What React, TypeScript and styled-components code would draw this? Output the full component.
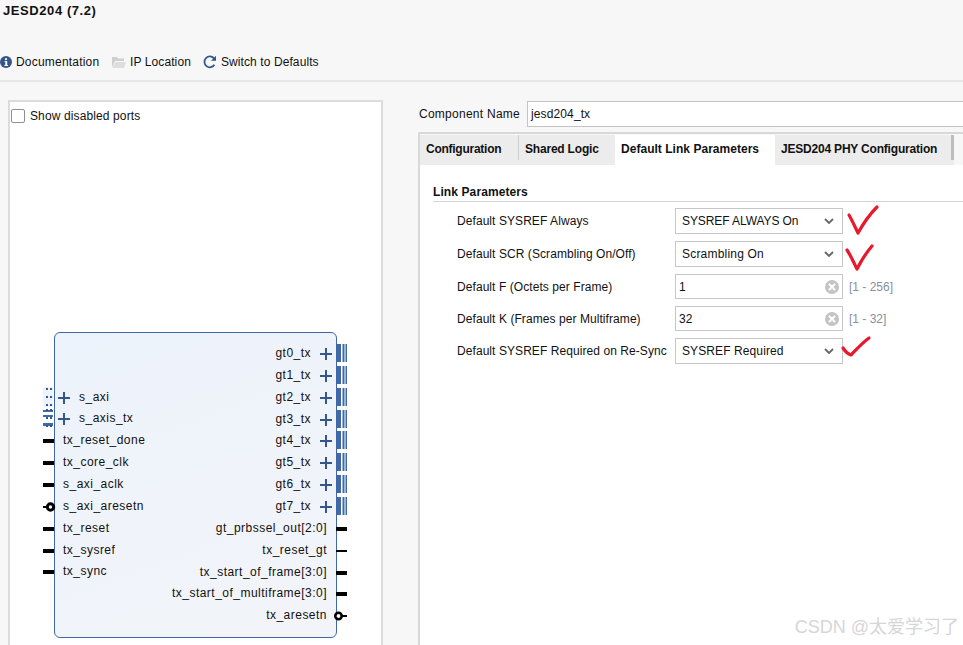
import React from "react";
import styled, { createGlobalStyle } from "styled-components";

const Global = createGlobalStyle`
  html, body { margin: 0; padding: 0; background: #f7f7f7; }
  * { box-sizing: border-box; }
`;

const Page = styled.div`
  position: relative;
  width: 963px;
  height: 645px;
  overflow: hidden;
  background: #f7f7f7;
  color: #111;
  font-family: "Liberation Sans", Arial, sans-serif;
  font-size: 12px;
  display: flex;
  flex-direction: column;
`;

const Header = styled.header`
  height: 82px;
  flex: none;
  border-bottom: 2px solid #e6e6e6;
  display: flex;
  flex-direction: column;
`;

const Title = styled.div`
  font-weight: 700;
  font-size: 13px;
  line-height: 15px;
  letter-spacing: 0.58px;
  padding: 3px 0 0 3px;
  height: 54px;
`;

const Toolbar = styled.div`
  display: flex;
  align-items: center;
  height: 16px;
`;

const ToolItem = styled.div<{ $w: number; $ls: number }>`
  display: flex;
  align-items: center;
  gap: 4px;
  width: ${(p) => p.$w}px;
  flex: none;
  letter-spacing: ${(p) => p.$ls}px;
  white-space: nowrap;
`;

const Main = styled.main`
  flex: 1;
  display: flex;
  min-height: 0;
`;

const Left = styled.section`
  width: 375px;
  margin: 18px 0 0 8px;
  background: #fff;
  border: 2px solid #dcdcdc;
  border-bottom: none;
  flex: none;
  position: relative;
`;

const ShowPorts = styled.label`
  display: flex;
  align-items: center;
  gap: 5px;
  padding: 7px 0 0 1px;
  letter-spacing: 0.12px;
`;

const Box = styled.span`
  width: 14px;
  height: 14px;
  border: 1px solid #8e8e8e;
  border-radius: 2px;
  background: #fff;
  flex: none;
`;

const Block = styled.div`
  position: absolute;
  left: 44px;
  top: 230px;
  width: 283px;
  height: 306px;
  border: 1px solid #3f67a8;
  border-radius: 6px;
  background: linear-gradient(160deg, #edf3fc 0%, #f2f4f8 100%);
  display: flex;
  justify-content: space-between;
  letter-spacing: 0.48px;
`;

const PortCol = styled.div<{ $top: number; $right?: boolean }>`
  display: flex;
  flex-direction: column;
  padding-top: ${(p) => p.$top}px;
  align-items: ${(p) => (p.$right ? "flex-end" : "flex-start")};
`;

const Port = styled.div<{ $right?: boolean; $plus?: boolean }>`
  position: relative;
  height: 21.86px;
  line-height: 21.86px;
  white-space: nowrap;
  padding-left: ${(p) => (p.$right ? 0 : p.$plus ? 24 : 8)}px;
  padding-right: ${(p) => (p.$right ? (p.$plus ? 25 : 9) : 0)}px;
`;

const PlusIcon = styled.svg<{ $right?: boolean }>`
  position: absolute;
  top: 5px;
  ${(p) => (p.$right ? "right: 4px;" : "left: 3px;")}
`;

const PinIcon = styled.svg<{ $right?: boolean }>`
  position: absolute;
  top: 0;
  ${(p) => (p.$right ? "right: -11px;" : "left: -12px;")}
`;

const Right = styled.section`
  flex: 1;
  min-width: 0;
  margin: 19px 0 0 35px;
  display: flex;
  flex-direction: column;
`;

const NameRow = styled.div`
  display: flex;
  align-items: center;
  height: 26px;
`;

const NameLabel = styled.div`
  width: 109px;
  padding-left: 1px;
  flex: none;
  letter-spacing: 0.26px;
`;

const NameInput = styled.div`
  flex: 1;
  height: 26px;
  background: #fff;
  border: 1px solid #c4c4c4;
  border-right: none;
  padding-left: 3px;
  line-height: 24px;
  letter-spacing: 0.12px;
`;

const TabPane = styled.div`
  margin-top: 5px;
  flex: 1;
  border-top: 2px solid #d8d8d8;
  border-left: 2px solid #d8d8d8;
  padding-top: 1px;
  display: flex;
  flex-direction: column;
`;

const TabBar = styled.div`
  display: flex;
  height: 30px;
  flex: none;
  width: 534px;
  background: #ececec;
  position: relative;
`;

const Tab = styled.div<{ $w: number; $ls: number; $active?: boolean; $sep?: boolean }>`
  width: ${(p) => p.$w}px;
  flex: none;
  background: ${(p) => (p.$active ? "#fff" : "transparent")};
  font-weight: 700;
  letter-spacing: ${(p) => p.$ls}px;
  padding: 7px 0 0 6px;
  line-height: 15px;
  white-space: nowrap;
  position: relative;
  &::after {
    content: "";
    display: ${(p) => (p.$sep ? "block" : "none")};
    position: absolute;
    right: 0;
    top: 0;
    width: 1px;
    height: 25px;
    background: #cfcfcf;
  }
`;

const TabEnd = styled.div`
  width: 3px;
  height: 25px;
  background: #bdbdbd;
  margin-left: 1px;
`;

const Content = styled.div`
  flex: 1;
  background: #fff;
  padding: 20px 0 0 13px;
`;

const GroupTitle = styled.div`
  font-weight: 700;
  line-height: 14px;
  letter-spacing: 0.1px;
  padding-bottom: 2px;
  border-bottom: 1px solid #d4d4d4;
`;

const Rows = styled.div`
  display: flex;
  flex-direction: column;
  gap: 7px;
  padding: 6px 0 0 24px;
`;

const Row = styled.div`
  display: flex;
  align-items: center;
`;

const RowLabel = styled.div`
  width: 218px;
  flex: none;
  letter-spacing: 0.07px;
  white-space: nowrap;
`;

const Field = styled.div<{ $h: number; $ls?: number }>`
  width: 168px;
  height: ${(p) => p.$h}px;
  flex: none;
  background: #fff;
  border: 1px solid #c6c6c6;
  display: flex;
  align-items: center;
  justify-content: space-between;
  padding: 0 3px 0 3px;
  letter-spacing: ${(p) => p.$ls ?? 0.14}px;
`;

const SelectField = styled(Field)`
  padding: 0 8px 0 6px;
`;

const Range = styled.span`
  margin-left: 6px;
  color: #8a8f99;
  letter-spacing: 0;
`;

const Checks = styled.svg`
  position: absolute;
  left: 840px;
  top: 200px;
`;

const Watermark = styled.div`
  position: absolute;
  right: 4px;
  bottom: 6px;
  font-size: 18px;
  line-height: 24px;
  color: #d6d6d6;
  font-family: "Liberation Sans", "Noto Sans CJK SC", sans-serif;
  white-space: nowrap;
`;

const Plus = ({ right }: { right?: boolean }) => (
  <PlusIcon $right={right} width="12" height="12" viewBox="0 0 12 12">
    <path d="M0 6h12M6 0v12" stroke="#34568b" strokeWidth="2" />
  </PlusIcon>
);

const Bus = () => (
  <PinIcon $right width="10" height="20" viewBox="0 0 10 20">
    <path d="M0 1h4v18H0zM5.5 1h2v18h-2zM8.5 1H10v18H8.5z" fill="#3f6aa6" />
  </PinIcon>
);

const Bar = ({ right, thin }: { right?: boolean; thin?: boolean }) => (
  <PinIcon $right={right} width="11" height="22" viewBox="0 0 11 22">
    <rect x="0" y={thin ? 10 : 9} width="11" height={thin ? 2 : 4} fill="#000" />
  </PinIcon>
);

const Circle = ({ right }: { right?: boolean }) => (
  <PinIcon $right={right} width="13" height="22" viewBox="0 0 13 22">
    {right ? (
      <>
        <rect x="7" y="10" width="6" height="2" fill="#000" />
        <circle cx="4.5" cy="11" r="3.2" fill="#fff" stroke="#000" strokeWidth="2.6" />
      </>
    ) : (
      <>
        <rect x="0" y="10" width="5" height="2" fill="#000" />
        <circle cx="7.5" cy="11" r="3.2" fill="#fff" stroke="#000" strokeWidth="3" />
      </>
    )}
  </PinIcon>
);

const AxiIcon = ({ strong }: { strong?: boolean }) => (
  <PinIcon width="10" height="20" viewBox="0 0 10 20">
    <rect x="0" y="0" width="10" height="20" fill={strong ? "#ffffff" : "#edf3fc"} />
    {strong && <path d="M0 2h10v2H0zM0 7h10v2H0zM0 15h10v3H0z" fill="#3f6aa6" />}
    <path
      d="M3 1h2v2H3zM7 1h2v2H7zM3 9h2v2H3zM7 9h2v2H7zM3 17h2v2H3zM7 17h2v2H7z"
      fill="#34568b"
    />
  </PinIcon>
);

const leftPorts: { n: string; k: string }[] = [
  { n: "s_axi", k: "axi" },
  { n: "s_axis_tx", k: "axis" },
  { n: "tx_reset_done", k: "bar" },
  { n: "tx_core_clk", k: "bar" },
  { n: "s_axi_aclk", k: "bar" },
  { n: "s_axi_aresetn", k: "circle" },
  { n: "tx_reset", k: "bar" },
  { n: "tx_sysref", k: "bar" },
  { n: "tx_sync", k: "bar" },
];

const rightPorts: { n: string; k: string }[] = [
  ...Array.from({ length: 8 }, (_, i) => ({ n: `gt${i}_tx`, k: "bus" })),
  { n: "gt_prbssel_out[2:0]", k: "bar" },
  { n: "tx_reset_gt", k: "thin" },
  { n: "tx_start_of_frame[3:0]", k: "bar" },
  { n: "tx_start_of_multiframe[3:0]", k: "bar" },
  { n: "tx_aresetn", k: "circle" },
];

const Chevron = () => (
  <svg width="10" height="6" viewBox="0 0 10 6">
    <path d="M1 1l4 4 4-4" fill="none" stroke="#666" strokeWidth="1.8" />
  </svg>
);

const ClearIcon = () => (
  <svg width="14" height="14" viewBox="0 0 14 14">
    <circle cx="7" cy="7" r="7" fill="#c4c4c4" />
    <path d="M4 4l6 6M10 4l-6 6" stroke="#fff" strokeWidth="2" />
  </svg>
);

export default function App() {
  return (
    <Page>
      <Global />
      <Header>
        <Title>JESD204 (7.2)</Title>
        <Toolbar>
          <ToolItem $w={112} $ls={0.2}>
            <svg width="12" height="12" viewBox="0 0 12 12">
              <circle cx="6" cy="6" r="6" fill="#34568b" />
              <path d="M5 2.2h2v1.8H5zM4.6 5h2.6v4h.8v1H4.4V9h.9V6h-.7z" fill="#fff" />
            </svg>
            <span>Documentation</span>
          </ToolItem>
          <ToolItem $w={91} $ls={0.1}>
            <svg width="14" height="12" viewBox="0 0 14 12">
              <path d="M0 1h5l1 1.5h6V5H3L0 11z" fill="#cfcfcf" />
              <path d="M0 12l3-6h11l-2 6z" fill="#dedede" />
            </svg>
            <span>IP Location</span>
          </ToolItem>
          <ToolItem $w={130} $ls={0.09}>
            <svg width="14" height="14" viewBox="0 0 14 14">
              <path d="M11.4 9.8A5.4 5.4 0 1 1 11 3.4" fill="none" stroke="#34568b" strokeWidth="1.8" />
              <path d="M13 0.8v5h-5z" fill="#34568b" />
            </svg>
            <span>Switch to Defaults</span>
          </ToolItem>
        </Toolbar>
      </Header>
      <Main>
        <Left>
          <ShowPorts>
            <Box />
            Show disabled ports
          </ShowPorts>
          <Block>
            <PortCol $top={53.5}>
              {leftPorts.map((p) => (
                <Port key={p.n} $plus={p.k === "axi" || p.k === "axis"}>
                  {(p.k === "axi" || p.k === "axis") && (
                    <>
                      <AxiIcon strong={p.k === "axis"} />
                      <Plus />
                    </>
                  )}
                  {p.k === "bar" && <Bar />}
                  {p.k === "circle" && <Circle />}
                  {p.n}
                </Port>
              ))}
            </PortCol>
            <PortCol $top={10} $right>
              {rightPorts.map((p) => (
                <Port key={p.n} $right $plus={p.k === "bus"}>
                  {p.k === "bus" && (
                    <>
                      <Plus right />
                      <Bus />
                    </>
                  )}
                  {p.k === "bar" && <Bar right />}
                  {p.k === "thin" && <Bar right thin />}
                  {p.k === "circle" && <Circle right />}
                  {p.n}
                </Port>
              ))}
            </PortCol>
          </Block>
        </Left>
        <Right>
          <NameRow>
            <NameLabel>Component Name</NameLabel>
            <NameInput>jesd204_tx</NameInput>
          </NameRow>
          <TabPane>
            <TabBar>
              <Tab $w={99} $ls={-0.26} $sep>Configuration</Tab>
              <Tab $w={96} $ls={-0.2}>Shared Logic</Tab>
              <Tab $w={160} $ls={0.03} $active>Default Link Parameters</Tab>
              <Tab $w={175} $ls={-0.2}>JESD204 PHY Configuration</Tab>
              <TabEnd />
            </TabBar>
            <Content>
              <GroupTitle>Link Parameters</GroupTitle>
              <Rows>
                <Row>
                  <RowLabel>Default SYSREF Always</RowLabel>
                  <SelectField $h={26} $ls={-0.09}>SYSREF ALWAYS On<Chevron /></SelectField>
                </Row>
                <Row>
                  <RowLabel>Default SCR (Scrambling On/Off)</RowLabel>
                  <SelectField $h={26} $ls={0.2}>Scrambling On<Chevron /></SelectField>
                </Row>
                <Row>
                  <RowLabel>Default F (Octets per Frame)</RowLabel>
                  <Field $h={25}>1<ClearIcon /></Field>
                  <Range>[1 - 256]</Range>
                </Row>
                <Row>
                  <RowLabel>Default K (Frames per Multiframe)</RowLabel>
                  <Field $h={25}>32<ClearIcon /></Field>
                  <Range>[1 - 32]</Range>
                </Row>
                <Row>
                  <RowLabel>Default SYSREF Required on Re-Sync</RowLabel>
                  <SelectField $h={26} $ls={0.1}>SYSREF Required<Chevron /></SelectField>
                </Row>
              </Rows>
            </Content>
          </TabPane>
        </Right>
      </Main>
      <Checks width="42" height="165" viewBox="840 200 42 165">
        <g fill="none" stroke="#e8192c" strokeWidth="3.2" strokeLinecap="round" strokeLinejoin="round">
          <path d="M849 215c3 5 6 12 9 18c5-9 11-18 19-26" />
          <path d="M847 250c4 6 7 13 10 19c4-8 9-16 15-23" />
          <path d="M843 348c2 3 5 6 8 7c6-6 11-12 18-17" />
        </g>
      </Checks>
      <Watermark>CSDN @太爱学习了</Watermark>
    </Page>
  );
}
